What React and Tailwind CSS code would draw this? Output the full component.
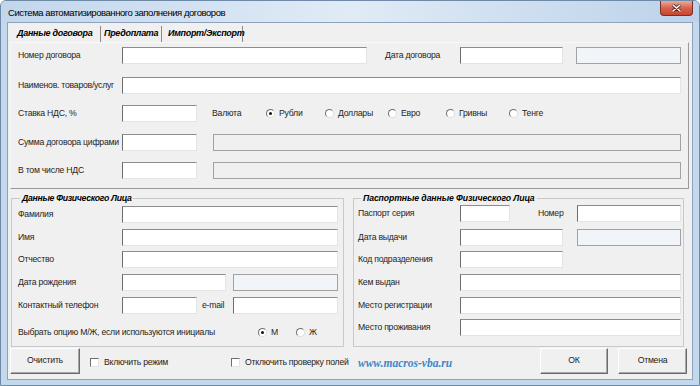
import React from 'react';

// textbox looks, written out in full so tailwind picks them up
const field = 'h-[17px] shrink-0 bg-white border border-t-[#8d8d8d] border-l-[#6c6c6c] border-r-[#e4e4e4] border-b-[#e4e4e4]';
const locked = 'h-[17px] shrink-0 bg-[#f0f0f0] border border-[#a2a2a2]';
const lockedTint = 'h-[17px] shrink-0 bg-[#f1f5fa] border border-[#a2a2a2]';

function Field({ w, kind }) {
  const base = kind === 'locked' ? locked : kind === 'tint' ? lockedTint : field;
  return <div className={`${base} ${w}`} />;
}

function Row({ label, lw, className = '', children }) {
  return (
    <div className={`flex items-center h-[17px] ${className}`}>
      <span className={`${lw} shrink-0 whitespace-nowrap`}>{label}</span>
      {children}
    </div>
  );
}

function Radio({ checked, label, className = '' }) {
  return (
    <div className={`flex items-center shrink-0 ${className}`}>
      <span className="w-[9px] h-[9px] shrink-0 rounded-full bg-white border border-t-[#6f6f6f] border-l-[#6f6f6f] border-r-[#dedede] border-b-[#dedede] flex items-center justify-center">
        {checked && <span className="w-[3px] h-[3px] rounded-full bg-[#111]" />}
      </span>
      <span className="ml-[4px] whitespace-nowrap">{label}</span>
    </div>
  );
}

function Check({ label, className = '' }) {
  return (
    <div className={`flex items-center shrink-0 ${className}`}>
      <span className="w-[9px] h-[9px] shrink-0 bg-white border border-t-[#6f6f6f] border-l-[#6f6f6f] border-r-[#e4e4e4] border-b-[#e4e4e4]" />
      <span className="ml-[5px] whitespace-nowrap">{label}</span>
    </div>
  );
}

function Btn({ w, children }) {
  return (
    <div className={`h-[26px] ${w} shrink-0 flex items-center justify-center bg-[#f0f0f0] border border-t-white border-l-white border-r-[#6a6a6a] border-b-[#6a6a6a] shadow-[inset_-1px_-1px_0_#a9a9a9]`}>
      {children}
    </div>
  );
}

export default function App() {
  return (
    <div className="w-[700px] h-[386px] flex flex-col bg-[#c3d7ed] border border-[#6f8aa6] rounded-t-[6px] overflow-hidden font-['Liberation_Sans',Arial,sans-serif] text-[8.7px] tracking-[-0.25px] text-[#1e1e1e]">
      {/* title bar */}
      <div className="h-[21px] shrink-0 flex items-start bg-linear-to-r from-[#c2d6ec] via-[#e0ebf6] to-[#bcd2ea]">
        <span className="mt-[5px] ml-[7px] text-[9.5px] tracking-[-0.45px] text-black whitespace-nowrap">
          Система автоматизированного заполнения договоров
        </span>
        <div className="ml-auto mr-[6px] w-[33px] h-[15px] rounded-b-[4px] border border-t-0 border-[#7a2f26] bg-linear-to-b from-[#e9a99b] via-[#d6624f] to-[#c8442f] flex items-center justify-center">
          <svg width="9" height="8" viewBox="0 0 9 8">
            <path d="M1 1 L8 7 M8 1 L1 7" stroke="#5a1e17" strokeWidth="3" strokeLinecap="round" />
            <path d="M1 1 L8 7 M8 1 L1 7" stroke="#ffffff" strokeWidth="1.6" strokeLinecap="round" />
          </svg>
        </div>
      </div>

      {/* client area */}
      <div className="mx-[6px] h-[358px] shrink-0 flex flex-col bg-[#f0f0f0] border border-[#8ea3bb]">
        {/* tabs */}
        <div className="mt-[3px] ml-[8px] h-[16px] flex items-stretch font-bold italic text-[9px] tracking-[-0.3px] text-black whitespace-nowrap">
          <div className="w-[85px] pl-[1px] flex items-center border-r border-[#8a8a8a]">Данные договора</div>
          <div className="w-[61px] pl-[3px] flex items-center border-r border-[#8a8a8a]">Предоплата</div>
          <div className="w-[81px] pl-[6px] flex items-center border-r border-[#8a8a8a]">Импорт/Экспорт</div>
        </div>

        {/* tab page */}
        <div className="ml-[2px] w-[679px] h-[147px] shrink-0 border border-t-[#f8f8f8] border-l-[#f8f8f8] border-r-[#9a9a9a] border-b-[#9a9a9a] pt-[4px] pl-[7px]">
          <Row label="Номер договора" lw="w-[104px]">
            <Field w="w-[245px]" />
            <span className="ml-[18px] w-[75px] shrink-0 whitespace-nowrap">Дата договора</span>
            <Field w="w-[103px]" />
            <div className="ml-[13px]"><Field w="w-[105px]" kind="tint" /></div>
          </Row>
          <Row label="Наименов. товаров/услуг" lw="w-[104px]" className="mt-[13px]">
            <Field w="w-[559px]" />
          </Row>
          <Row label="Ставка НДС, %" lw="w-[104px]" className="mt-[11px]">
            <Field w="w-[75px]" />
            <span className="ml-[15px] w-[54px] shrink-0">Валюта</span>
            <Radio checked label="Рубли" className="w-[59px]" />
            <Radio label="Доллары" className="w-[63px]" />
            <Radio label="Евро" className="w-[58px]" />
            <Radio label="Гривны" className="w-[63px]" />
            <Radio label="Тенге" />
          </Row>
          <Row label="Сумма договора цифрами" lw="w-[104px]" className="mt-[12px]">
            <Field w="w-[75px]" />
            <div className="ml-[16px]"><Field w="w-[468px]" kind="locked" /></div>
          </Row>
          <Row label="В том числе НДС" lw="w-[104px]" className="mt-[11px]">
            <Field w="w-[75px]" />
            <div className="ml-[16px]"><Field w="w-[468px]" kind="locked" /></div>
          </Row>
        </div>

        {/* groups */}
        <div className="mt-[4px] ml-[3px] flex">
          <fieldset className="w-[333px] h-[154px] border border-[#c9c9c9] pl-[6px]">
            <legend className="ml-[2px] px-[2px] leading-[10px] font-bold italic text-[8.7px] tracking-[-0.3px] text-black">Данные Физического Лица</legend>
            <Row label="Фамилия" lw="w-[104px]" className="mt-[3px]">
              <Field w="w-[216px]" />
            </Row>
            <Row label="Имя" lw="w-[104px]" className="mt-[6px]">
              <Field w="w-[216px]" />
            </Row>
            <Row label="Отчество" lw="w-[104px]" className="mt-[5px]">
              <Field w="w-[216px]" />
            </Row>
            <Row label="Дата рождения" lw="w-[104px]" className="mt-[6px]">
              <Field w="w-[104px]" />
              <div className="ml-[7px]"><Field w="w-[105px]" kind="tint" /></div>
            </Row>
            <Row label="Контактный телефон" lw="w-[104px]" className="mt-[6px]">
              <Field w="w-[75px]" />
              <span className="ml-[5px] w-[31px] shrink-0">e-mail</span>
              <Field w="w-[105px]" />
            </Row>
            <Row label="Выбрать опцию М/Ж, если используются инициалы" lw="w-[240px]" className="mt-[10px]">
              <Radio checked label="М" className="w-[38px]" />
              <Radio label="Ж" />
            </Row>
          </fieldset>

          <fieldset className="ml-[9px] w-[331px] h-[154px] border border-[#c9c9c9] pl-[4px]">
            <legend className="ml-[3px] px-[2px] leading-[10px] font-bold italic text-[8.7px] tracking-[-0.1px] text-black">Паспортные данные Физического Лица</legend>
            <Row label="Паспорт серия" lw="w-[102px]" className="mt-[2px]">
              <Field w="w-[50px]" />
              <span className="ml-[28px] w-[39px] shrink-0">Номер</span>
              <Field w="w-[104px]" />
            </Row>
            <Row label="Дата выдачи" lw="w-[102px]" className="mt-[7px]">
              <Field w="w-[103px]" />
              <div className="ml-[14px]"><Field w="w-[104px]" kind="tint" /></div>
            </Row>
            <Row label="Код подразделения" lw="w-[102px]" className="mt-[5px]">
              <Field w="w-[103px]" />
            </Row>
            <Row label="Кем выдан" lw="w-[102px]" className="mt-[6px]">
              <Field w="w-[221px]" />
            </Row>
            <Row label="Место регистрации" lw="w-[102px]" className="mt-[6px]">
              <Field w="w-[221px]" />
            </Row>
            <Row label="Место проживания" lw="w-[102px]" className="mt-[5px]">
              <Field w="w-[221px]" />
            </Row>
          </fieldset>
        </div>

        {/* bottom bar */}
        <div className="mt-[1px] flex items-center">
          <div className="ml-[2px]"><Btn w="w-[70px]">Очистить</Btn></div>
          <Check label="Включить режим" className="ml-[10px] w-[141px] mt-[3px]" />
          <Check label="Отключить проверку полей" className="w-[127px] mt-[3px]" />
          <span className="mt-[6px] font-['Liberation_Serif',serif] italic font-bold text-[11.5px] tracking-normal text-[#3f86c8] whitespace-nowrap">
            www.macros-vba.ru
          </span>
          <div className="ml-auto flex mr-[5px]">
            <Btn w="w-[68px]">ОК</Btn>
            <div className="ml-[10px]"><Btn w="w-[69px]">Отмена</Btn></div>
          </div>
        </div>
      </div>
    </div>
  );
}
